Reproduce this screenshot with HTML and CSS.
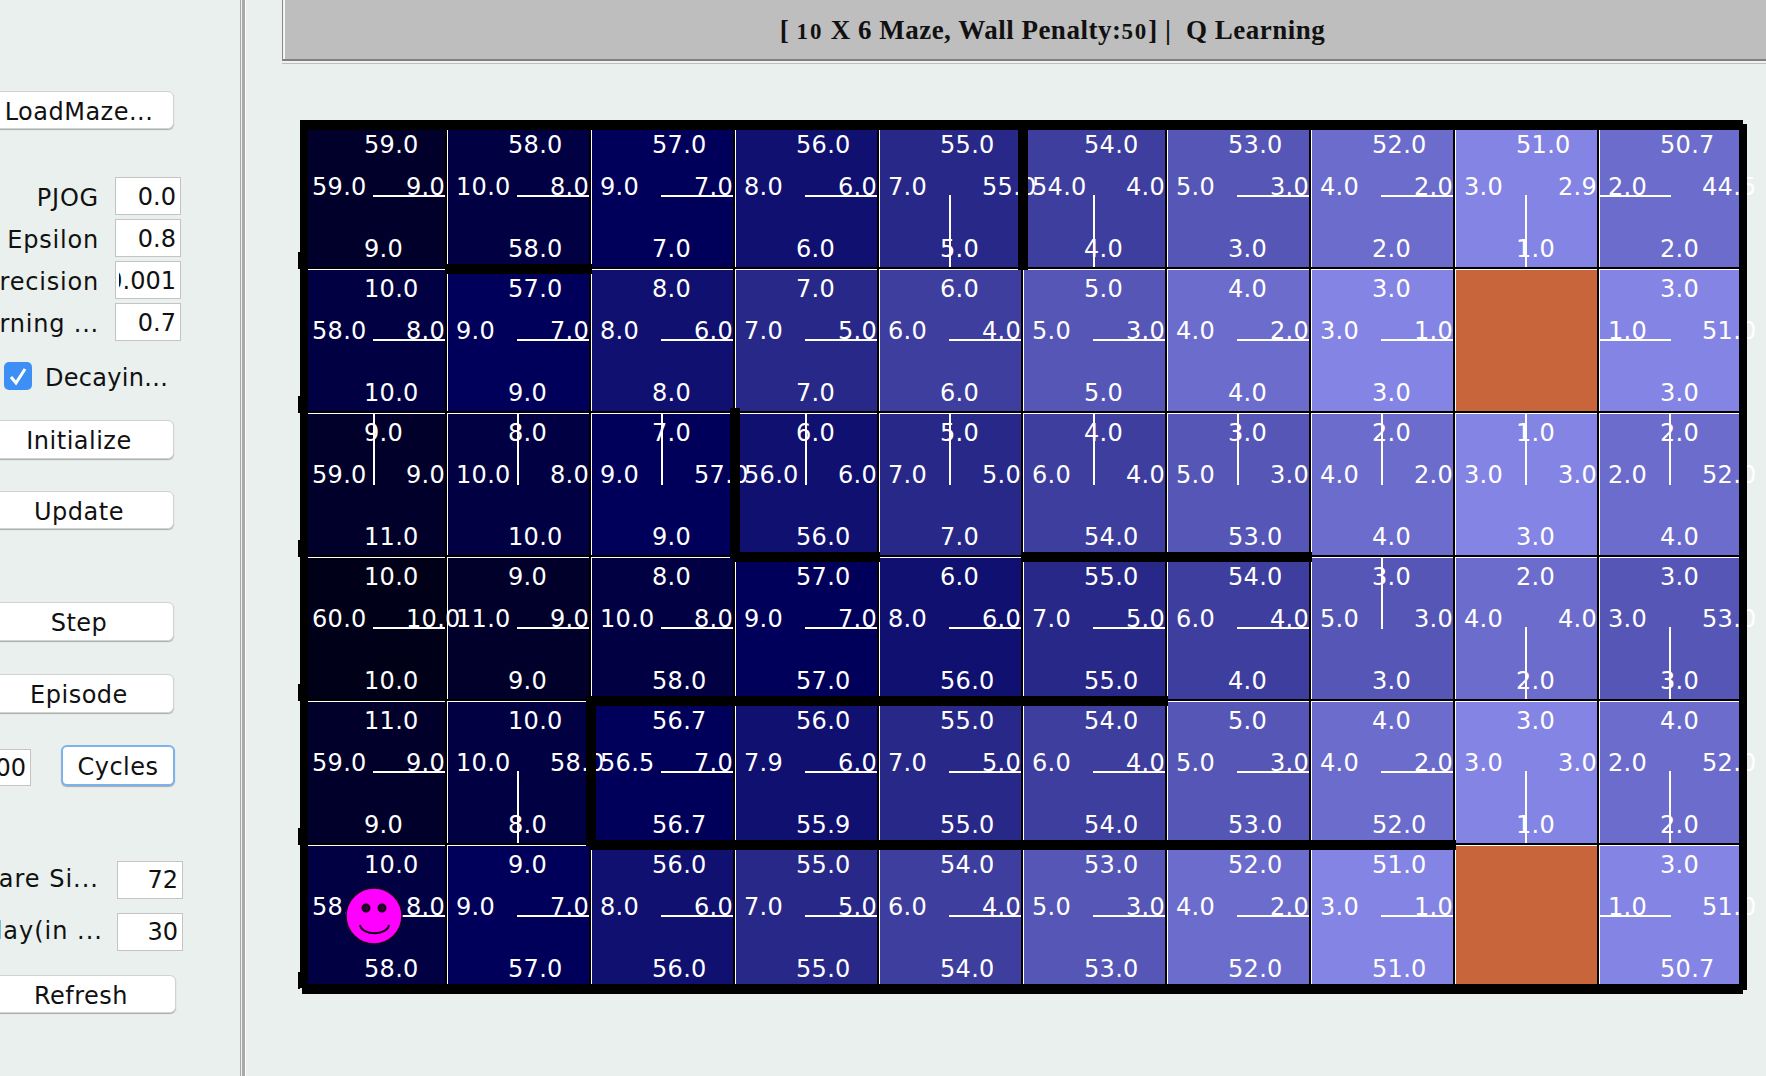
FILE: index.html
```html
<!DOCTYPE html>
<html lang="en">

<head>
  <meta charset="UTF-8">
  <meta name="viewport" content="width=device-width, initial-scale=1.0">
  <link rel="stylesheet" href="styles.css">
  <title>Maze Q Learning</title>
</head>

<body>
  <aside class="side">
    <button class="btn load">LoadMaze...</button>

    <div class="params">
      <div class="param"><label>PJOG</label><div class="field">0.0</div></div>
      <div class="param"><label>Epsilon</label><div class="field">0.8</div></div>
      <div class="param"><label>Precision</label><div class="field clip">0.001</div></div>
      <div class="param"><label>Learning ...</label><div class="field">0.7</div></div>
    </div>

    <div class="check">
      <svg class="box" viewBox="0 0 28 28">
        <rect width="28" height="28" rx="5" fill="#3d8ff5"/>
        <path d="M7 15 L12 21 L21 7" fill="none" stroke="#fff" stroke-width="3"/>
      </svg>
      <span>Decayin...</span>
    </div>

    <button class="btn init">Initialize</button>
    <button class="btn update">Update</button>
    <button class="btn step">Step</button>
    <button class="btn episode">Episode</button>

    <div class="cycles">
      <div class="field">100</div>
      <button class="btn focus">Cycles</button>
    </div>

    <div class="params lower">
      <div class="param"><label>Square Si...</label><div class="field">72</div></div>
      <div class="param"><label class="delay">Delay(in ...</label><div class="field">30</div></div>
    </div>

    <button class="btn refresh">Refresh</button>
  </aside>

  <div class="split"></div>

  <main class="main">
    <div class="titlebar">[ <span class="num">10</span> X 6 Maze, Wall Penalty:<span class="num">50</span>] |&nbsp; Q Learning</div>

    <div class="maze">
      <!-- row 1 -->
      <div class="cell v1 e"><span class="t">59.0</span><span class="l">59.0</span><span class="r">9.0</span><span class="b">9.0</span></div>
      <div class="cell v2 e"><span class="t">58.0</span><span class="l">10.0</span><span class="r">8.0</span><span class="b">58.0</span><em class="wb"></em></div>
      <div class="cell v3 e"><span class="t">57.0</span><span class="l">9.0</span><span class="r">7.0</span><span class="b">7.0</span></div>
      <div class="cell v4 e"><span class="t">56.0</span><span class="l">8.0</span><span class="r">6.0</span><span class="b">6.0</span></div>
      <div class="cell v5 s"><span class="t">55.0</span><span class="l">7.0</span><span class="r">55.0</span><span class="b">5.0</span></div>
      <div class="cell v6 s"><span class="t">54.0</span><span class="l">54.0</span><span class="r">4.0</span><span class="b">4.0</span><em class="wl"></em></div>
      <div class="cell v7 e"><span class="t">53.0</span><span class="l">5.0</span><span class="r">3.0</span><span class="b">3.0</span></div>
      <div class="cell v8 e"><span class="t">52.0</span><span class="l">4.0</span><span class="r">2.0</span><span class="b">2.0</span></div>
      <div class="cell v9 s"><span class="t">51.0</span><span class="l">3.0</span><span class="r">2.9</span><span class="b">1.0</span></div>
      <div class="cell v8 w"><span class="t">50.7</span><span class="l">2.0</span><span class="r">44.5</span><span class="b">2.0</span></div>
      <!-- row 2 -->
      <div class="cell v2 e"><span class="t">10.0</span><span class="l">58.0</span><span class="r">8.0</span><span class="b">10.0</span></div>
      <div class="cell v3 e"><span class="t">57.0</span><span class="l">9.0</span><span class="r">7.0</span><span class="b">9.0</span></div>
      <div class="cell v4 e"><span class="t">8.0</span><span class="l">8.0</span><span class="r">6.0</span><span class="b">8.0</span></div>
      <div class="cell v5 e"><span class="t">7.0</span><span class="l">7.0</span><span class="r">5.0</span><span class="b">7.0</span></div>
      <div class="cell v6 e"><span class="t">6.0</span><span class="l">6.0</span><span class="r">4.0</span><span class="b">6.0</span></div>
      <div class="cell v7 e"><span class="t">5.0</span><span class="l">5.0</span><span class="r">3.0</span><span class="b">5.0</span></div>
      <div class="cell v8 e"><span class="t">4.0</span><span class="l">4.0</span><span class="r">2.0</span><span class="b">4.0</span></div>
      <div class="cell v9 e"><span class="t">3.0</span><span class="l">3.0</span><span class="r">1.0</span><span class="b">3.0</span></div>
      <div class="cell goal"></div>
      <div class="cell v9 w"><span class="t">3.0</span><span class="l">1.0</span><span class="r">51.0</span><span class="b">3.0</span></div>
      <!-- row 3 -->
      <div class="cell v1 n"><span class="t">9.0</span><span class="l">59.0</span><span class="r">9.0</span><span class="b">11.0</span></div>
      <div class="cell v2 n"><span class="t">8.0</span><span class="l">10.0</span><span class="r">8.0</span><span class="b">10.0</span></div>
      <div class="cell v3 n"><span class="t">7.0</span><span class="l">9.0</span><span class="r">57.0</span><span class="b">9.0</span></div>
      <div class="cell v4 n"><span class="t">6.0</span><span class="l">56.0</span><span class="r">6.0</span><span class="b">56.0</span><em class="wl"></em><em class="wb"></em></div>
      <div class="cell v5 n"><span class="t">5.0</span><span class="l">7.0</span><span class="r">5.0</span><span class="b">7.0</span></div>
      <div class="cell v6 n"><span class="t">4.0</span><span class="l">6.0</span><span class="r">4.0</span><span class="b">54.0</span><em class="wb"></em></div>
      <div class="cell v7 n"><span class="t">3.0</span><span class="l">5.0</span><span class="r">3.0</span><span class="b">53.0</span><em class="wb"></em></div>
      <div class="cell v8 n"><span class="t">2.0</span><span class="l">4.0</span><span class="r">2.0</span><span class="b">4.0</span></div>
      <div class="cell v9 n"><span class="t">1.0</span><span class="l">3.0</span><span class="r">3.0</span><span class="b">3.0</span></div>
      <div class="cell v8 n"><span class="t">2.0</span><span class="l">2.0</span><span class="r">52.0</span><span class="b">4.0</span></div>
      <!-- row 4 -->
      <div class="cell v0 e"><span class="t">10.0</span><span class="l">60.0</span><span class="r">10.0</span><span class="b">10.0</span></div>
      <div class="cell v1 e"><span class="t">9.0</span><span class="l">11.0</span><span class="r">9.0</span><span class="b">9.0</span></div>
      <div class="cell v2 e"><span class="t">8.0</span><span class="l">10.0</span><span class="r">8.0</span><span class="b">58.0</span><em class="wb"></em></div>
      <div class="cell v3 e"><span class="t">57.0</span><span class="l">9.0</span><span class="r">7.0</span><span class="b">57.0</span><em class="wb"></em></div>
      <div class="cell v4 e"><span class="t">6.0</span><span class="l">8.0</span><span class="r">6.0</span><span class="b">56.0</span><em class="wb"></em></div>
      <div class="cell v5 e"><span class="t">55.0</span><span class="l">7.0</span><span class="r">5.0</span><span class="b">55.0</span><em class="wb"></em></div>
      <div class="cell v6 e"><span class="t">54.0</span><span class="l">6.0</span><span class="r">4.0</span><span class="b">4.0</span></div>
      <div class="cell v7 n"><span class="t">3.0</span><span class="l">5.0</span><span class="r">3.0</span><span class="b">3.0</span></div>
      <div class="cell v8 s"><span class="t">2.0</span><span class="l">4.0</span><span class="r">4.0</span><span class="b">2.0</span></div>
      <div class="cell v7 s"><span class="t">3.0</span><span class="l">3.0</span><span class="r">53.0</span><span class="b">3.0</span></div>
      <!-- row 5 -->
      <div class="cell v1 e"><span class="t">11.0</span><span class="l">59.0</span><span class="r">9.0</span><span class="b">9.0</span></div>
      <div class="cell v2 s"><span class="t">10.0</span><span class="l">10.0</span><span class="r">58.0</span><span class="b">8.0</span></div>
      <div class="cell v3 e"><span class="t">56.7</span><span class="l">56.5</span><span class="r">7.0</span><span class="b">56.7</span><em class="wl"></em><em class="wb"></em></div>
      <div class="cell v4 e"><span class="t">56.0</span><span class="l">7.9</span><span class="r">6.0</span><span class="b">55.9</span><em class="wb"></em></div>
      <div class="cell v5 e"><span class="t">55.0</span><span class="l">7.0</span><span class="r">5.0</span><span class="b">55.0</span><em class="wb"></em></div>
      <div class="cell v6 e"><span class="t">54.0</span><span class="l">6.0</span><span class="r">4.0</span><span class="b">54.0</span><em class="wb"></em></div>
      <div class="cell v7 e"><span class="t">5.0</span><span class="l">5.0</span><span class="r">3.0</span><span class="b">53.0</span><em class="wb"></em></div>
      <div class="cell v8 e"><span class="t">4.0</span><span class="l">4.0</span><span class="r">2.0</span><span class="b">52.0</span><em class="wb"></em></div>
      <div class="cell v9 s"><span class="t">3.0</span><span class="l">3.0</span><span class="r">3.0</span><span class="b">1.0</span></div>
      <div class="cell v8 s"><span class="t">4.0</span><span class="l">2.0</span><span class="r">52.0</span><span class="b">2.0</span></div>
      <!-- row 6 -->
      <div class="cell v2 e"><span class="t">10.0</span><span class="l">58.0</span><span class="r">8.0</span><span class="b">58.0</span>
        <svg class="smiley" viewBox="0 0 60 60">
          <circle cx="30" cy="30" r="28" fill="#ff00ff" stroke="#14001a" stroke-width="1.5"/>
          <circle cx="22" cy="22" r="3.5" fill="#3a003a" stroke="#14001a" stroke-width="2"/>
          <circle cx="38" cy="22" r="3.5" fill="#3a003a" stroke="#14001a" stroke-width="2"/>
          <path d="M16 39 C18 50, 43 50, 45 39" fill="none" stroke="#14001a" stroke-width="2"/>
        </svg>
      </div>
      <div class="cell v3 e"><span class="t">9.0</span><span class="l">9.0</span><span class="r">7.0</span><span class="b">57.0</span></div>
      <div class="cell v4 e"><span class="t">56.0</span><span class="l">8.0</span><span class="r">6.0</span><span class="b">56.0</span></div>
      <div class="cell v5 e"><span class="t">55.0</span><span class="l">7.0</span><span class="r">5.0</span><span class="b">55.0</span></div>
      <div class="cell v6 e"><span class="t">54.0</span><span class="l">6.0</span><span class="r">4.0</span><span class="b">54.0</span></div>
      <div class="cell v7 e"><span class="t">53.0</span><span class="l">5.0</span><span class="r">3.0</span><span class="b">53.0</span></div>
      <div class="cell v8 e"><span class="t">52.0</span><span class="l">4.0</span><span class="r">2.0</span><span class="b">52.0</span></div>
      <div class="cell v9 e"><span class="t">51.0</span><span class="l">3.0</span><span class="r">1.0</span><span class="b">51.0</span></div>
      <div class="cell goal"></div>
      <div class="cell v9 w"><span class="t">3.0</span><span class="l">1.0</span><span class="r">51.0</span><span class="b">50.7</span></div>

      <em class="edge top"></em>
      <em class="edge left"></em>
      <em class="edge right"></em>
      <em class="edge bottom"></em>
    </div>
  </main>
</body>

</html>
```

FILE: styles.css
```css
html, body {
  height: 100%;
}

body {
  margin: 0;
  display: flex;
  height: 1076px;
  overflow: hidden;
  background-color: #e9f0ee;
  font-family: "DejaVu Sans", sans-serif;
  color: #111;
}

/* left control panel, cut off by the window on its left side */
.side {
  width: 240px;
  flex-shrink: 0;
  padding-top: 91px;
  box-sizing: border-box;
  overflow: hidden;
  font-size: 24px;
}

.btn {
  display: block;
  width: 190px;
  margin-left: -16px;
  padding: 3px 0 0;
  background-color: #fff;
  border: 1px solid #d2d2d2;
  border-radius: 6px;
  box-shadow: 0 1px 1px #a9a9a9;
  font-family: inherit;
  font-size: 24px;
  letter-spacing: 0.5px;
  color: #111;
}

.load {
  height: 38px;
}

.init {
  height: 39px;
  margin-top: 30px;
}

.update {
  height: 38px;
  margin-top: 32px;
}

.step {
  height: 39px;
  margin-top: 73px;
}

.episode {
  height: 39px;
  margin-top: 33px;
}

.refresh {
  height: 38px;
  margin-top: 24px;
  margin-left: -14px;
}

.params {
  display: flex;
  flex-direction: column;
  gap: 4px;
  width: 181px;
  margin-top: 48px;
}

.param {
  display: flex;
  justify-content: flex-end;
  align-items: center;
  gap: 16px;
  white-space: nowrap;
  letter-spacing: 0.8px;
}

.param label {
  padding-top: 4px;
}

.field {
  position: relative;
  display: flex;
  justify-content: flex-end;
  align-items: center;
  flex-shrink: 0;
  width: 66px;
  height: 38px;
  padding: 1px 4px 0 0;
  box-sizing: border-box;
  overflow: hidden;
  background-color: #fff;
  border: 1px solid #c4c4c4;
  letter-spacing: 0;
}

/* long value runs under the field's inner margin */
.clip::before {
  content: "";
  position: absolute;
  left: 0;
  top: 0;
  bottom: 0;
  width: 3px;
  background-color: #fff;
}

.lower {
  gap: 14px;
  width: 183px;
  margin-top: 75px;
}

.lower .param {
  gap: 18px;
  letter-spacing: 1px;
}

.lower label {
  padding-top: 0;
  margin-top: -3px;
}

.lower .field {
  padding-top: 0;
}

.param .delay {
  margin-right: -4px;
  padding-left: 4px;
}

.check {
  display: flex;
  align-items: center;
  gap: 13px;
  height: 28px;
  margin: 21px 0 0 4px;
  letter-spacing: 0.3px;
}

.check span {
  padding-top: 3px;
}

.box {
  width: 28px;
  height: 28px;
}

.cycles {
  display: flex;
  align-items: flex-end;
  gap: 30px;
  width: 210px;
  height: 41px;
  margin-top: 32px;
  margin-left: -35px;
}

.cycles .field {
  height: 37px;
}

.focus {
  width: 114px;
  height: 41px;
  margin-left: 0;
  border: 2px solid #7db2ec;
}

.split {
  width: 5px;
  flex-shrink: 0;
  box-sizing: border-box;
  border-left: 1px solid #a9a9a9;
  border-right: 3px solid #a9a9a9;
  box-shadow: 1px 0 0 #fff;
}

.main {
  flex: 1;
  min-width: 0;
  overflow: hidden;
  padding-left: 37px;
}

.titlebar {
  width: 1540px;
  height: 61px;
  box-sizing: border-box;
  background-color: #bebebe;
  border-left: 1px solid #888;
  border-bottom: 2px solid #808080;
  box-shadow: inset 2px 0 0 #f4f4f4, 0 2px 0 #eef3f1, 0 3px 0 #bdbdbd;
  font-family: "Liberation Serif", serif;
  font-weight: bold;
  font-size: 27px;
  letter-spacing: 0.5px;
  line-height: 60px;
  text-align: center;
  white-space: nowrap;
}

/* the title font has old style figures */
.num {
  font-size: 0.85em;
  letter-spacing: 2px;
}

.maze {
  position: relative;
  display: grid;
  grid-template-columns: repeat(10, 144px);
  grid-template-rows: repeat(6, 144px);
  width: 1440px;
  margin: 62px 0 0 19px;
  font-size: 24px;
  color: #fff;
}

.cell {
  position: relative;
  box-shadow: inset 2px 2px 0 #000, inset 3px 3px 0 #fff;
}

.v0 { background-color: #000018; }
.v1 { background-color: #00002a; }
.v2 { background-color: #000042; }
.v3 { background-color: #00005a; }
.v4 { background-color: #101070; }
.v5 { background-color: #282888; }
.v6 { background-color: #3e3e9e; }
.v7 { background-color: #5656b6; }
.v8 { background-color: #6c6ccc; }
.v9 { background-color: #8484e4; }
.goal { background-color: #c8653a; }

/* the four q values, painted above all cells so they can run into the next one */
.cell span {
  position: absolute;
  z-index: 1;
  white-space: nowrap;
  letter-spacing: 0.3px;
}

.t { left: 63px; top: 8px; }
.l { left: 11px; top: 50px; }
.r { left: 105px; top: 50px; }
.b { left: 63px; top: 112px; }

/* policy arrows */
.n::before,
.s::before,
.e::before,
.w::before {
  content: "";
  position: absolute;
  z-index: 1;
  background-color: #fff;
}

.n::before { left: 72px; top: 2px; width: 2px; height: 72px; }
.s::before { left: 72px; top: 72px; width: 2px; height: 72px; }
.e::before { left: 72px; top: 72px; width: 72px; height: 2px; }
.w::before { left: 2px; top: 72px; width: 72px; height: 2px; }

/* maze walls */
.wl,
.wb,
.edge {
  position: absolute;
  z-index: 2;
  background-color: #000;
}

.wl { left: -3px; top: -3px; width: 10px; height: 150px; }
.wb { left: 0; top: 141px; width: 147px; height: 10px; }

.top { left: -1px; top: -3px; width: 1443px; height: 10px; }
.left { left: -1px; top: -3px; width: 8px; height: 868px; }
.right { left: 1438px; top: 1px; width: 8px; height: 866px; }
.bottom { left: 1px; top: 861px; width: 1441px; height: 10px; }

.left::before {
  content: "";
  position: absolute;
  left: -2px;
  top: 5px;
  width: 2px;
  height: 864px;
  background: repeating-linear-gradient(to bottom, transparent 0 127px, #000 127px 144px);
}

.smiley {
  position: absolute;
  z-index: 3;
  left: 43px;
  top: 43px;
  width: 60px;
  height: 60px;
}
```
